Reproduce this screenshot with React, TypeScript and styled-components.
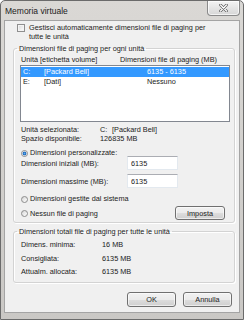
import * as React from 'react';
import styled, { createGlobalStyle, css } from 'styled-components';

/******************************************************************************/
/* Memoria virtuale dialog (Windows 7 basic look) */
/******************************************************************************/

const GlobalStyle = createGlobalStyle`
  html, body {
    margin: 0;
    padding: 0;
    background: #ffffff;
  }
`;

const Window = styled.div`
  box-sizing: border-box;
  width: 244px;
  height: 320px;
  display: flex;
  flex-direction: column;
  padding: 0 3px 6px 3px;
  border: 1px solid #6b6b6b;
  border-radius: 5px 5px 0 0;
  background: linear-gradient(#dad8d5, #cac8c5);
  font-family: 'Liberation Sans', Arial, sans-serif;
  font-size: 7.3px;
  color: #222222;
`;

const TitleBar = styled.div`
  height: 19px;
  display: flex;
  justify-content: space-between;
  align-items: flex-start;
`;

const Title = styled.span`
  margin: 5px 0 0 1px;
  font-size: 8.5px;
  line-height: 10px;
  color: #222222;
`;

const CloseButton = styled.div`
  box-sizing: border-box;
  width: 33px;
  height: 15px;
  display: flex;
  align-items: center;
  justify-content: center;
  border: 1px solid #8a8a8a;
  border-top: none;
  border-radius: 0 0 4px 4px;
  background: linear-gradient(#f4f4f4, #d6d6d6);
  box-shadow: inset 0 0 0 1px rgba(255, 255, 255, 0.7);
`;

const Client = styled.div`
  flex: 1;
  display: flex;
  flex-direction: column;
  padding: 3px 4px 0 8px;
  border: 1px solid #a4a4a4;
  background: #f0f0f0;
`;

const AutoRow = styled.div`
  display: flex;
  align-items: flex-start;
  gap: 4px;
  margin-left: 4px;
`;

const AutoText = styled.span`
  margin-top: -1px;
  line-height: 9px;
`;

const CheckBox = styled.span`
  box-sizing: border-box;
  flex: none;
  width: 8px;
  height: 8px;
  border: 1px solid #8f8f8f;
  background: linear-gradient(135deg, #d8d8d8, #ffffff);
  box-shadow: inset 0 0 0 1px #f4f4f4;
`;

const Group = styled.fieldset<{ $top: number }>`
  margin: ${(p) => p.$top}px 0 0 0;
  padding: 0 0 2px 0;
  min-width: 0;
  border: 1px solid #d3d3d3;
  border-radius: 3px;
  box-shadow: inset 1px 1px 0 #ffffff, 1px 1px 0 #ffffff;
`;

const Legend = styled.legend`
  margin-left: 3px;
  padding: 0 2px;
  line-height: 9px;
`;

const HeaderRow = styled.div`
  display: grid;
  grid-template-columns: 99px 1fr;
  margin-top: 2px;
  padding-left: 7px;
  line-height: 9px;
`;

const ListBox = styled.div`
  box-sizing: border-box;
  height: 57px;
  margin: 1px 4px 0 6px;
  padding: 1px 0;
  border: 1px solid #828790;
  background: #ffffff;
`;

const DriveRow = styled.div<{ $selected?: boolean }>`
  display: grid;
  grid-template-columns: 21px 103px 1fr;
  height: 10px;
  padding-left: 2px;
  line-height: 10px;
  ${(p) =>
    p.$selected &&
    css`
      background: #3399ff;
      color: #ffffff;
    `}
`;

const InfoRow = styled.div<{ $top?: number }>`
  display: grid;
  grid-template-columns: 79px 1fr;
  margin-top: ${(p) => p.$top ?? 0}px;
  padding-left: 7px;
  line-height: 9px;
`;

const DriveLetter = styled.span`
  display: inline-block;
  width: 12px;
`;

const RadioRow = styled.div<{ $top: number }>`
  display: flex;
  align-items: center;
  gap: 2px;
  margin-top: ${(p) => p.$top}px;
  padding-left: 7px;
  line-height: 8px;
`;

const Radio = styled.span<{ $checked?: boolean }>`
  box-sizing: border-box;
  flex: none;
  width: 7px;
  height: 7px;
  border: 1px solid #8c8c8c;
  border-radius: 50%;
  background: ${(p) =>
    p.$checked
      ? 'radial-gradient(circle, #5cb0f0 0, #1b63b8 1.6px, #e8eef4 2.2px, #ffffff 3px)'
      : 'linear-gradient(135deg, #d6d6d6, #ffffff)'};
`;

const SizeRow = styled.div<{ $top: number }>`
  display: grid;
  grid-template-columns: 106px 51px;
  align-items: center;
  margin-top: ${(p) => p.$top}px;
  padding-left: 7px;
`;

const SizeInput = styled.input`
  box-sizing: border-box;
  width: 51px;
  height: 14px;
  margin: 0;
  padding: 0 0 0 3px;
  border: 1px solid #e3e9ef;
  border-top-color: #abadb3;
  background: #ffffff;
  font-family: 'Liberation Sans', Arial, sans-serif;
  font-size: 7.3px;
  color: #222222;
  outline: none;
`;

const ActionRow = styled.div`
  display: flex;
  align-items: center;
  justify-content: space-between;
  height: 14px;
  margin-top: 3px;
  padding: 0 9px 0 7px;
`;

const RadioLabel = styled.span`
  display: flex;
  align-items: center;
  gap: 2px;
`;

const Button = styled.button<{ $w: number; $h: number }>`
  box-sizing: border-box;
  width: ${(p) => p.$w}px;
  height: ${(p) => p.$h}px;
  margin: 0;
  padding: 0;
  border: 1px solid #707070;
  border-radius: 3px;
  background: linear-gradient(#f2f2f2 0%, #ebebeb 50%, #dddddd 51%, #cfcfcf 100%);
  box-shadow: inset 0 0 0 1px rgba(255, 255, 255, 0.6);
  font-family: 'Liberation Sans', Arial, sans-serif;
  font-size: 7.3px;
  color: #222222;
`;

const Totals = styled.div`
  padding: 2px 0 1px 0;
`;

const TotalRow = styled.div`
  display: grid;
  grid-template-columns: 81px 1fr;
  padding-left: 7px;
  line-height: 13.5px;
`;

const Footer = styled.div`
  display: flex;
  justify-content: flex-end;
  gap: 7px;
  margin-top: 9px;
  padding-right: 3px;
`;

function CloseGlyph() {
  return (
    <svg width="9" height="8" viewBox="0 0 9 8">
      <path d="M1.5 1 L7.5 7 M7.5 1 L1.5 7" stroke="#5a5a5a" strokeWidth="2.6" strokeLinecap="round" />
      <path d="M1.5 1 L7.5 7 M7.5 1 L1.5 7" stroke="#ffffff" strokeWidth="1.3" strokeLinecap="round" />
    </svg>
  );
}

const drives = [
  { letter: 'C:', label: '[Packard Bell]', size: '6135 - 6135', selected: true },
  { letter: 'E:', label: '[Dati]', size: 'Nessuno', selected: false },
];

const totals = [
  ['Dimens. minima:', '16 MB'],
  ['Consigliata:', '6135 MB'],
  ['Attualm. allocata:', '6135 MB'],
];

export default function App() {
  return (
    <>
      <GlobalStyle />
      <Window>
        <TitleBar>
          <Title>Memoria virtuale</Title>
          <CloseButton>
            <CloseGlyph />
          </CloseButton>
        </TitleBar>
        <Client>
          <AutoRow>
            <CheckBox />
            <AutoText>
              Gestisci automaticamente dimensioni file di paging per
              <br />
              tutte le unità
            </AutoText>
          </AutoRow>

          <Group $top={3}>
            <Legend>Dimensioni file di paging per ogni unità</Legend>
            <HeaderRow>
              <span>Unità [etichetta volume]</span>
              <span>Dimensioni file di paging (MB)</span>
            </HeaderRow>
            <ListBox>
              {drives.map((d) => (
                <DriveRow key={d.letter} $selected={d.selected}>
                  <span>{d.letter}</span>
                  <span>{d.label}</span>
                  <span>{d.size}</span>
                </DriveRow>
              ))}
            </ListBox>
            <InfoRow $top={3}>
              <span>Unità selezionata:</span>
              <span>
                <DriveLetter>C:</DriveLetter>[Packard Bell]
              </span>
            </InfoRow>
            <InfoRow>
              <span>Spazio disponibile:</span>
              <span>126835 MB</span>
            </InfoRow>
            <RadioRow $top={6}>
              <Radio $checked />
              <span>Dimensioni personalizzate:</span>
            </RadioRow>
            <SizeRow $top={-1}>
              <span>Dimensioni iniziali (MB):</span>
              <SizeInput readOnly value="6135" />
            </SizeRow>
            <SizeRow $top={4}>
              <span>Dimensioni massime (MB):</span>
              <SizeInput readOnly value="6135" />
            </SizeRow>
            <RadioRow $top={7}>
              <Radio />
              <span>Dimensioni gestite dal sistema</span>
            </RadioRow>
            <ActionRow>
              <RadioLabel>
                <Radio />
                <span>Nessun file di paging</span>
              </RadioLabel>
              <Button $w={50} $h={14}>Imposta</Button>
            </ActionRow>
          </Group>

          <Group $top={4}>
            <Legend>Dimensioni totali file di paging per tutte le unità</Legend>
            <Totals>
              {totals.map(([label, value]) => (
                <TotalRow key={label}>
                  <span>{label}</span>
                  <span>{value}</span>
                </TotalRow>
              ))}
            </Totals>
          </Group>

          <Footer>
            <Button $w={49} $h={15}>OK</Button>
            <Button $w={49} $h={15}>Annulla</Button>
          </Footer>
        </Client>
      </Window>
    </>
  );
}
